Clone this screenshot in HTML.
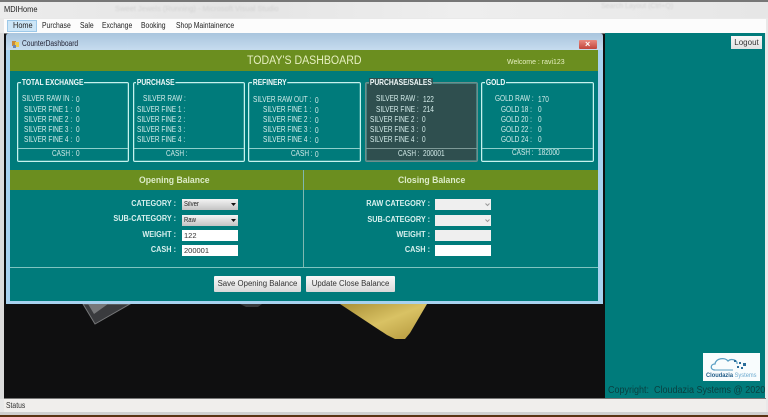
<!DOCTYPE html>
<html><head><meta charset="utf-8"><style>
html,body{margin:0;padding:0;background:#efeded}
#w{position:relative;width:768px;height:417px;overflow:hidden;background:#e9e9e9;font-family:"Liberation Sans",sans-serif;filter:blur(.35px)}
#w div,#w span{position:absolute;white-space:nowrap}
.t{font-size:8px;line-height:10px;color:#d4ecea;transform:scaleX(.81);transform-origin:0 0}
.m{font-size:8px;line-height:10px;color:#222;transform:scaleX(.85);transform-origin:0 0}
.p{border:1px solid #c6f2ee;border-radius:2px;box-sizing:border-box;top:82px;height:80px;box-shadow:inset 0 0 0 .5px #5fb5b2}
.l{height:1px;background:#8ecfcb;top:148px}
.g{font-size:8px;font-weight:bold;line-height:10px;color:#f2fafa;top:78px;background:#007b7b;padding:0 1px;transform:scaleX(.84);transform-origin:0 0}
.f{font-size:8px;font-weight:bold;line-height:10px;color:#d8f0ee;text-align:right;width:120px;transform:scaleX(.91);transform-origin:100% 0}
.s{background:linear-gradient(#f4f4f4,#c4c4c4);box-sizing:border-box;width:56px;height:11px;left:182px}
.st{font-size:7px;line-height:11px;color:#222;left:184px;transform:scaleX(.85);transform-origin:0 0}
.i{background:#fff;box-sizing:border-box;width:56px;height:11px;font-size:7.5px;line-height:11px;color:#333;padding-left:2px;left:182px}
.b{background:linear-gradient(#f8f8f8,#d9d9d9);font-size:7.8px;line-height:16px;text-align:center;color:#333;height:16px;top:276px;border-radius:1px}
.h{font-size:9.5px;font-weight:bold;line-height:11px;color:#dcebc8;transform:scaleX(.91);transform-origin:0 0;top:175px}
</style></head><body><div id="w">

<div style="left:0;top:0;width:768px;height:2px;background:#777"></div>
<div style="left:0;top:2px;width:768px;height:16px;background:linear-gradient(90deg,#ececec,#e4e4e4 30%,#eee 60%,#e6e6e6)"></div>
<div style="left:115px;top:4px;font-size:7.5px;color:#d2d2d2;filter:blur(.8px)">Sweet Jewels (Running) - Microsoft Visual Studio</div>
<div style="left:601px;top:3px;font-size:7px;color:#d2d2d2;filter:blur(.8px)">Search Layout (Ctrl+Q)</div>
<div class="m" style="left:4px;top:5px;transform:scaleX(.93);color:#222">MDIHome</div>

<div style="left:4px;top:19px;width:762px;height:14px;background:#fcfcfc;border-bottom:1px solid #777"></div>
<div style="left:7px;top:20px;width:30px;height:12px;background:#cde6f7;border:1px solid #9cc8e8;box-sizing:border-box"></div>
<div class="m" style="left:13px;top:21px;transform:scaleX(.92)">Home</div>
<div class="m" style="left:42px;top:21px">Purchase</div>
<div class="m" style="left:80px;top:21px">Sale</div>
<div class="m" style="left:102px;top:21px">Exchange</div>
<div class="m" style="left:141px;top:21px">Booking</div>
<div class="m" style="left:176px;top:21px">Shop Maintainence</div>

<div style="left:0;top:33px;width:4px;height:366px;background:#dcdcdc"></div>
<div style="left:762px;top:33px;width:6px;height:366px;background:#e8e8e8"></div>

<svg style="position:absolute;left:4px;top:34px" width="602" height="365" viewBox="4 34 602 365">
<defs><linearGradient id="au" x1="0" y1="0" x2="1" y2="1"><stop offset="0" stop-color="#a98f36"/><stop offset=".5" stop-color="#d9c264"/><stop offset="1" stop-color="#b2953a"/></linearGradient></defs>
<rect x="4" y="34" width="602" height="365" fill="#0f0f10"/>
<polygon points="83,304 95,324 130,304" fill="#3a3b3e" stroke="#77787a" stroke-width="1"/>
<polygon points="88,304 94,314 108,304" fill="#77787a"/>
<polygon points="340,304 387,335 395,339 405,339 410,333 427,304" fill="url(#au)"/>
<polygon points="240,304 262,304 258,307 246,307" fill="#38393b"/>
</svg>

<div style="left:605px;top:33px;width:160px;height:365px;background:#007b7b"></div>
<div style="left:731px;top:36px;width:31px;height:13px;background:linear-gradient(#f8f8f8,#e2e2e2);font-size:8px;line-height:13px;text-align:center;color:#333">Logout</div>

<div style="left:6px;top:33px;width:597px;height:271px;background:linear-gradient(#a9c5de 0,#c6dcef 17px,#a8d2ef 17px);border-radius:3px 3px 0 0"></div>
<div class="m" style="left:22px;top:39px;color:#223;transform:scaleX(.83)">CounterDashboard</div>
<svg style="position:absolute;left:11px;top:40px" width="9" height="9" viewBox="0 0 9 9"><rect x="1" y="1" width="4" height="5" fill="#c98b3a"/><rect x="4" y="2" width="4" height="5" fill="#f0cc4a"/><rect x="2" y="5" width="3" height="3" fill="#6a86b8"/></svg>
<div style="left:579px;top:40px;width:18px;height:9px;background:linear-gradient(#e88a80,#c2453c);border-radius:1px"></div>
<div style="left:585px;top:39px;font-size:9px;line-height:10px;color:#fff;font-weight:bold">×</div>

<div style="left:10px;top:50px;width:588px;height:251px;background:#007b7b"></div>
<div style="left:10px;top:50px;width:588px;height:21px;background:#6b8e1f"></div>
<div style="left:247px;top:54px;font-size:11.5px;line-height:14px;color:#e6efc0;transform:scaleX(.92);transform-origin:0 0">TODAY'S DASHBOARD</div>
<div style="left:507px;top:57px;font-size:7.5px;line-height:10px;color:#e6efc0;transform:scaleX(.93);transform-origin:0 0">Welcome : ravi123</div>

<div class="p" style="left:17px;width:112px"></div>
<div class="p" style="left:133px;width:112px"></div>
<div class="p" style="left:248px;width:113px"></div>
<div class="p" style="left:365px;width:113px;background:#2f4f4f;border-color:#6f8f8d"></div>
<div class="p" style="left:481px;width:113px"></div>
<div class="l" style="left:18px;width:110px"></div>
<div class="l" style="left:134px;width:110px"></div>
<div class="l" style="left:249px;width:111px"></div>
<div class="l" style="left:366px;width:111px;background:#7d9997"></div>
<div class="l" style="left:482px;width:111px"></div>

<div class="g" style="left:21px">TOTAL EXCHANGE</div>
<div class="g" style="left:136px">PURCHASE</div>
<div class="g" style="left:252px">REFINERY</div>
<div class="g" style="left:369px;background:#2f4f4f">PURCHASE/SALES</div>
<div class="g" style="left:485px">GOLD</div>

<div class="t" style="left:22px;top:94px">SILVER RAW IN :</div><div class="t" style="left:76px;top:95px">0</div>
<div class="t" style="left:24px;top:105px">SILVER FINE 1 :</div><div class="t" style="left:76px;top:105px">0</div>
<div class="t" style="left:24px;top:115px">SILVER FINE 2 :</div><div class="t" style="left:76px;top:115px">0</div>
<div class="t" style="left:24px;top:125px">SILVER FINE 3 :</div><div class="t" style="left:76px;top:125px">0</div>
<div class="t" style="left:24px;top:135px">SILVER FINE 4 :</div><div class="t" style="left:76px;top:135px">0</div>
<div class="t" style="left:52px;top:149px">CASH :</div><div class="t" style="left:76px;top:149px">0</div>

<div class="t" style="left:143px;top:94px">SILVER RAW :</div>
<div class="t" style="left:137px;top:105px">SILVER FINE 1 :</div>
<div class="t" style="left:137px;top:115px">SILVER FINE 2 :</div>
<div class="t" style="left:137px;top:125px">SILVER FINE 3 :</div>
<div class="t" style="left:137px;top:135px">SILVER FINE 4 :</div>
<div class="t" style="left:166px;top:149px">CASH :</div>

<div class="t" style="left:253px;top:95px">SILVER RAW OUT :</div><div class="t" style="left:315px;top:96px">0</div>
<div class="t" style="left:263px;top:105px">SILVER FINE 1 :</div><div class="t" style="left:315px;top:106px">0</div>
<div class="t" style="left:263px;top:115px">SILVER FINE 2 :</div><div class="t" style="left:315px;top:116px">0</div>
<div class="t" style="left:263px;top:125px">SILVER FINE 3 :</div><div class="t" style="left:315px;top:126px">0</div>
<div class="t" style="left:263px;top:135px">SILVER FINE 4 :</div><div class="t" style="left:315px;top:136px">0</div>
<div class="t" style="left:291px;top:149px">CASH :</div><div class="t" style="left:315px;top:150px">0</div>

<div class="t" style="left:376px;top:94px">SILVER RAW :</div><div class="t" style="left:423px;top:95px">122</div>
<div class="t" style="left:376px;top:105px">SILVER FINE :</div><div class="t" style="left:423px;top:105px">214</div>
<div class="t" style="left:370px;top:115px">SILVER FINE 2 :</div><div class="t" style="left:422px;top:115px">0</div>
<div class="t" style="left:370px;top:125px">SILVER FINE 3 :</div><div class="t" style="left:422px;top:125px">0</div>
<div class="t" style="left:370px;top:135px">SILVER FINE 4 :</div><div class="t" style="left:422px;top:135px">0</div>
<div class="t" style="left:398px;top:149px">CASH :</div><div class="t" style="left:423px;top:149px">200001</div>

<div class="t" style="left:495px;top:94px">GOLD RAW :</div><div class="t" style="left:538px;top:95px">170</div>
<div class="t" style="left:501px;top:105px">GOLD 18 :</div><div class="t" style="left:538px;top:105px">0</div>
<div class="t" style="left:501px;top:115px">GOLD 20 :</div><div class="t" style="left:538px;top:115px">0</div>
<div class="t" style="left:501px;top:125px">GOLD 22 :</div><div class="t" style="left:538px;top:125px">0</div>
<div class="t" style="left:501px;top:135px">GOLD 24 :</div><div class="t" style="left:538px;top:135px">0</div>
<div class="t" style="left:512px;top:148px">CASH :</div><div class="t" style="left:538px;top:148px">182000</div>

<div style="left:10px;top:170px;width:588px;height:20px;background:#6b8e1f"></div>
<div style="left:303px;top:170px;width:1px;height:97px;background:#7fb8b0"></div>
<div style="left:10px;top:267px;width:588px;height:1px;background:#7fc4c0"></div>
<div class="h" style="left:139px">Opening Balance</div>
<div class="h" style="left:398px">Closing Balance</div>

<div class="f" style="left:56px;top:199px">CATEGORY :</div>
<div class="f" style="left:56px;top:214px">SUB-CATEGORY :</div>
<div class="f" style="left:56px;top:230px">WEIGHT :</div>
<div class="f" style="left:56px;top:245px">CASH :</div>
<div class="s" style="top:199px"></div><div class="st" style="top:199px">Silver</div>
<div class="s" style="top:215px"></div><div class="st" style="top:215px">Raw</div>
<svg style="position:absolute;left:231px;top:203px" width="5" height="20" viewBox="0 0 5 20"><path d="M0 0H5L2.5 3ZM0 16H5L2.5 19Z" fill="#111"/></svg>
<div class="i" style="top:230px">122</div>
<div class="i" style="top:245px">200001</div>

<div class="f" style="left:310px;top:199px">RAW CATEGORY :</div>
<div class="f" style="left:310px;top:215px">SUB-CATEGORY :</div>
<div class="f" style="left:310px;top:230px">WEIGHT :</div>
<div class="f" style="left:310px;top:245px">CASH :</div>
<div class="i" style="left:435px;top:199px;background:#efefef"></div>
<div class="i" style="left:435px;top:215px;background:#efefef"></div>
<svg style="position:absolute;left:485px;top:203px" width="5" height="20" viewBox="0 0 5 20"><path d="M.5 .5L2.5 2.5L4.5 .5M.5 16.5L2.5 18.5L4.5 16.5" fill="none" stroke="#999"/></svg>
<div class="i" style="left:435px;top:230px;background:#efefef"></div>
<div class="i" style="left:435px;top:245px"></div>

<div class="b" style="left:214px;width:87px">Save Opening Balance</div>
<div class="b" style="left:306px;width:89px">Update Close Balance</div>

<div style="left:703px;top:353px;width:57px;height:28px;background:#f8fcfd"></div>
<svg style="position:absolute;left:703px;top:353px" width="57" height="28" viewBox="0 0 57 28">
<path d="M12 17C7 17 7 11 12 11C13 5 22 4 25 8C28 5 35 7 34 11" fill="none" stroke="#5a9fc4" stroke-width="1.3"/>
<path d="M12 17H30" fill="none" stroke="#5a9fc4" stroke-width="1"/>
<path d="M31 7h2v2h-2zM36 9h2v2h-2zM40 10h3v3h-3zM34 13h2v2h-2zM38 14h2v2h-2z" fill="#2c6d9a"/>
</svg>
<div style="left:706px;top:372px;font-size:6.5px;font-weight:bold;line-height:8px;color:#1f5c88;transform:scaleX(.88);transform-origin:0 0">Cloudazia <span style="position:static;color:#6aa9cf;font-weight:normal">Systems</span></div>
<div style="left:608px;top:385px;font-size:10px;line-height:12px;color:#0a3f40;transform:scaleX(.9);transform-origin:0 0">Copyright:&nbsp; Cloudazia Systems @ 2020</div>

<div style="left:4px;top:398px;width:762px;height:1px;background:#777"></div>
<div style="left:4px;top:399px;width:762px;height:13px;background:#f0eeec"></div>
<div class="m" style="left:6px;top:401px;color:#333">Status</div>
<div style="left:0;top:412px;width:768px;height:3px;background:#cfcfcf"></div>
<div style="left:0;top:415px;width:768px;height:2px;background:#5a3212"></div>
</div></body></html>
